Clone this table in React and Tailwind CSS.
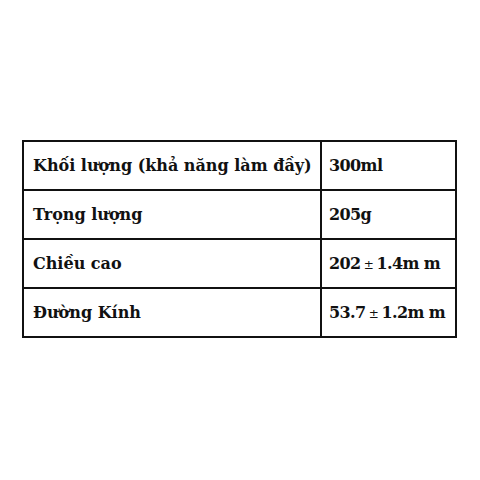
export default function App() {
  const rows = [
    ["Khối lượng (khả năng làm đầy)", <>300ml</>],
    ["Trọng lượng", <>205g</>],
    ["Chiều cao", <>202<span className="text-[12px] font-normal"> ± </span>1.4m m</>],
    ["Đường Kính", <>53.7<span className="text-[12px] font-normal"> ± </span>1.2m m</>],
  ];
  return (
    <div className="w-[480px] h-[480px] bg-white pl-[22px] pt-[140px]" style={{ fontFamily: '"DejaVu Serif", "Liberation Serif", serif' }}>
      <table className="table-fixed border-collapse w-[435px] text-[#111] font-bold text-[16px]">
        <colgroup>
          <col className="w-[298px]" />
          <col />
        </colgroup>
        <tbody>
          {rows.map(([a, b]) => (
            <tr key={a} className="h-[49px]">
              <td className="border-2 border-[#111] pl-[9px] whitespace-nowrap">{a}</td>
              <td className="border-2 border-[#111] pl-[7px] whitespace-nowrap tracking-[-0.6px]">{b}</td>
            </tr>
          ))}
        </tbody>
      </table>
    </div>
  );
}
